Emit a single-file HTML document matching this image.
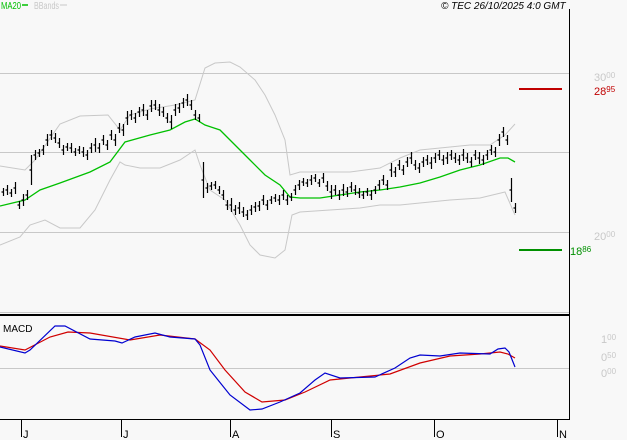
<!DOCTYPE html>
<html><head><meta charset="utf-8"><style>
html,body{margin:0;padding:0;background:#f8f8f8;}
svg{display:block;font-family:"Liberation Sans",sans-serif;}
</style></head><body>
<svg width="627" height="440" xmlns="http://www.w3.org/2000/svg">
<rect width="627" height="440" fill="#f8f8f8"/>
<text x="1" y="9" font-size="10" fill="#00c000" textLength="20" lengthAdjust="spacingAndGlyphs">MA20</text>
<line x1="22" y1="5" x2="28" y2="5" stroke="#00c000" stroke-width="1.5"/>
<text x="34" y="9" font-size="10" fill="#c8c8c8" textLength="25" lengthAdjust="spacingAndGlyphs">BBands</text>
<line x1="60" y1="5" x2="67" y2="5" stroke="#c8c8c8"/>
<text x="441" y="9" font-size="10" font-style="italic" fill="#000">© TEC 26/10/2025 4:0 GMT</text>
<g stroke="#c8c8c8" stroke-width="1">
<line x1="0" y1="73.5" x2="569" y2="73.5"/>
<line x1="0" y1="152.5" x2="569" y2="152.5"/>
<line x1="0" y1="232.5" x2="569" y2="232.5"/>
<line x1="0" y1="312.5" x2="569" y2="312.5"/>
<line x1="0" y1="368.5" x2="569" y2="368.5"/>
</g>
<line x1="569.5" y1="9" x2="569.5" y2="419" stroke="#000"/>
<line x1="0" y1="315" x2="569" y2="315" stroke="#000" stroke-width="2"/>
<line x1="0" y1="419.5" x2="570" y2="419.5" stroke="#000"/>
<g font-size="11" fill="#000">
<line x1="21.5" y1="419" x2="21.5" y2="437" stroke="#000"/><text x="23" y="438">J</text>
<line x1="121.5" y1="419" x2="121.5" y2="437" stroke="#000"/><text x="123" y="438">J</text>
<line x1="230.5" y1="419" x2="230.5" y2="437" stroke="#000"/><text x="232" y="438">A</text>
<line x1="331.5" y1="419" x2="331.5" y2="437" stroke="#000"/><text x="333" y="438">S</text>
<line x1="434.5" y1="419" x2="434.5" y2="437" stroke="#000"/><text x="436" y="438">O</text>
<line x1="557.5" y1="419" x2="557.5" y2="437" stroke="#000"/><text x="559" y="438">N</text>
</g>
<g font-size="11" fill="#c8c8c8">
<text x="594" y="81">30<tspan font-size="8" dy="-3">00</tspan></text>
<text x="594" y="240">20<tspan font-size="8" dy="-3">00</tspan></text>
<text x="601" y="343">1<tspan font-size="8" dy="-3">00</tspan></text>
<text x="601" y="361">0<tspan font-size="8" dy="-3">50</tspan></text>
<text x="601" y="377">0<tspan font-size="8" dy="-3">00</tspan></text>
</g>
<line x1="519" y1="89" x2="562" y2="89" stroke="#c00000" stroke-width="2"/>
<text x="594" y="95" font-size="11" fill="#c00000">28<tspan font-size="8" dy="-3">95</tspan></text>
<line x1="519" y1="250" x2="562" y2="250" stroke="#009000" stroke-width="2"/>
<text x="570" y="255" font-size="11" fill="#009000">18<tspan font-size="8" dy="-3">86</tspan></text>
<text x="3" y="332" font-size="10" fill="#000">MACD</text>
<polyline fill="none" stroke="#c8c8c8" points="0,166 25,170 35,160 60,124 80,116 108,115 120,130 130,115 150,109 175,105 195,100 205,68 215,63 230,62 240,67 255,80 265,95 275,115 285,140 290,175 300,172 330,172 350,172 380,168 400,158 420,150 440,148 470,145 490,145 505,135 515,124"/>
<polyline fill="none" stroke="#c8c8c8" points="0,245 20,237 30,225 45,220 60,228 80,228 95,210 110,180 120,162 125,165 140,168 160,168 180,160 195,150 200,165 210,190 225,200 240,225 250,245 260,255 275,258 285,250 292,215 300,212 330,210 360,208 380,205 400,205 420,203 450,200 480,198 505,192 515,215"/>
<polyline fill="none" stroke="#00c000" stroke-width="1.3" points="0,206 25,200 40,190 60,183 90,172 110,162 125,142 150,135 170,130 185,122 195,119 205,125 220,130 235,145 250,160 265,175 280,185 290,197 300,198 320,198 340,195 360,192 380,190 400,187 420,183 440,177 460,170 480,165 500,158 508,158 515,162"/>
<path fill="none" stroke="#000" stroke-width="1.2" d="
M3.5 188v8m-2 -4h2 M7.5 185v10m-2 -5h2 M11.5 189v8m-2 -4h2 M15.5 182v12m-2 -6h2 M19.5 201v8m-2 -4h2 M23.5 194v12m-2 -6h2 M27.5 190v10m-2 -5h2 M31.5 155v30m-2 -15h2 M35.5 150v10m-2 -5h2 M39.5 149v8m-2 -4h2 M43.5 145v10m-2 -5h2 M47.5 134v12m-2 -6h2 M51.5 130v10m-2 -5h2 M55.5 133v10m-2 -5h2 M59.5 138v10m-2 -5h2 M63.5 145v10m-2 -5h2 M67.5 143v8m-2 -4h2 M71.5 143v10m-2 -5h2 M75.5 148v8m-2 -4h2 M79.5 146v8m-2 -4h2 M83.5 147v10m-2 -5h2 M87.5 150v10m-2 -5h2 M91.5 143v10m-2 -5h2 M95.5 138v14m-2 -7h2 M99.5 143v10m-2 -5h2 M103.5 135v10m-2 -5h2 M107.5 140v10m-2 -5h2 M111.5 130v10m-2 -5h2 M115.5 134v12m-2 -6h2 M119.5 123v10m-2 -5h2 M123.5 124v12m-2 -6h2 M127.5 111v14m-2 -7h2 M131.5 110v10m-2 -5h2 M135.5 113v10m-2 -5h2 M139.5 107v10m-2 -5h2 M143.5 104v12m-2 -6h2 M147.5 110v10m-2 -5h2 M151.5 100v12m-2 -6h2 M155.5 100v10m-2 -5h2 M159.5 104v12m-2 -6h2 M163.5 107v10m-2 -5h2 M167.5 113v10m-2 -5h2 M171.5 115v14m-2 -7h2 M175.5 104v12m-2 -6h2 M179.5 103v10m-2 -5h2 M183.5 98v10m-2 -5h2 M187.5 94v12m-2 -6h2 M191.5 100v10m-2 -5h2 M195.5 110v10m-2 -5h2 M199.5 114v8m-2 -4h2
M203.5 162v36m-2 -18h2 M207.5 183v10m-2 -5h2 M211.5 182v8m-2 -4h2 M215.5 181v8m-2 -4h2 M219.5 186v8m-2 -4h2 M223.5 190v10m-2 -5h2 M227.5 200v10m-2 -5h2 M231.5 198v14m-2 -7h2 M235.5 205v10m-2 -5h2 M239.5 202v12m-2 -6h2 M243.5 207v10m-2 -5h2 M247.5 210v10m-2 -5h2 M251.5 205v10m-2 -5h2 M255.5 202v10m-2 -5h2 M259.5 201v10m-2 -5h2 M263.5 195v10m-2 -5h2 M267.5 200v10m-2 -5h2 M271.5 196v8m-2 -4h2 M275.5 194v8m-2 -4h2 M279.5 195v10m-2 -5h2 M283.5 190v10m-2 -5h2 M287.5 195v10m-2 -5h2 M291.5 193v8m-2 -4h2 M295.5 185v10m-2 -5h2 M299.5 180v10m-2 -5h2 M303.5 178v8m-2 -4h2 M307.5 179v8m-2 -4h2 M311.5 175v10m-2 -5h2 M315.5 174v8m-2 -4h2 M319.5 179v8m-2 -4h2 M323.5 173v10m-2 -5h2 M327.5 181v10m-2 -5h2 M331.5 185v14m-2 -7h2 M335.5 185v10m-2 -5h2 M339.5 190v10m-2 -5h2 M343.5 184v12m-2 -6h2 M347.5 187v10m-2 -5h2 M351.5 182v10m-2 -5h2 M355.5 185v10m-2 -5h2 M359.5 188v10m-2 -5h2 M363.5 191v8m-2 -4h2 M367.5 188v8m-2 -4h2 M371.5 190v10m-2 -5h2 M375.5 186v8m-2 -4h2 M379.5 180v10m-2 -5h2 M383.5 175v10m-2 -5h2 M387.5 180v10m-2 -5h2 M391.5 163v14m-2 -7h2 M395.5 167v10m-2 -5h2 M399.5 160v10m-2 -5h2 M403.5 165v10m-2 -5h2 M407.5 157v10m-2 -5h2 M411.5 152v12m-2 -6h2 M415.5 160v10m-2 -5h2 M419.5 163v10m-2 -5h2 M423.5 157v10m-2 -5h2 M427.5 155v10m-2 -5h2 M431.5 157v12m-2 -6h2 M435.5 153v10m-2 -5h2 M439.5 150v10m-2 -5h2 M443.5 155v10m-2 -5h2 M447.5 152v12m-2 -6h2 M451.5 150v10m-2 -5h2 M455.5 153v10m-2 -5h2 M459.5 155v10m-2 -5h2 M463.5 149v12m-2 -6h2 M467.5 153v10m-2 -5h2 M471.5 157v10m-2 -5h2 M475.5 150v10m-2 -5h2 M479.5 152v12m-2 -6h2 M483.5 155v10m-2 -5h2 M487.5 150v10m-2 -5h2 M491.5 145v10m-2 -5h2 M495.5 147v10m-2 -5h2 M499.5 134v12m-2 -6h2 M503.5 127v10m-2 -5h2 M507.5 135v10m-2 -5h2 M511.5 178v24m-2 -12h2 M515.5 203v10m-2 -5h2"/>
<polyline fill="none" stroke="#d00000" stroke-width="1.2" points="0,346 25,350 50,337 68,332 90,333 130,340 160,335 195,339 210,350 225,370 245,392 262,402 285,400 305,392 330,380 360,377 390,374 420,363 450,356 480,354 500,352 508,354 515,358"/>
<polyline fill="none" stroke="#0000d0" stroke-width="1.2" points="0,347 25,353 30,350 55,326 65,326 90,339 115,341 122,343 135,337 155,333 170,337 195,339 200,345 210,370 230,395 250,410 262,409 280,402 300,393 315,380 325,373 340,378 375,377 395,368 410,358 420,355 440,356 460,353 490,354 498,349 505,348 509,352 515,367"/>
</svg>
</body></html>
